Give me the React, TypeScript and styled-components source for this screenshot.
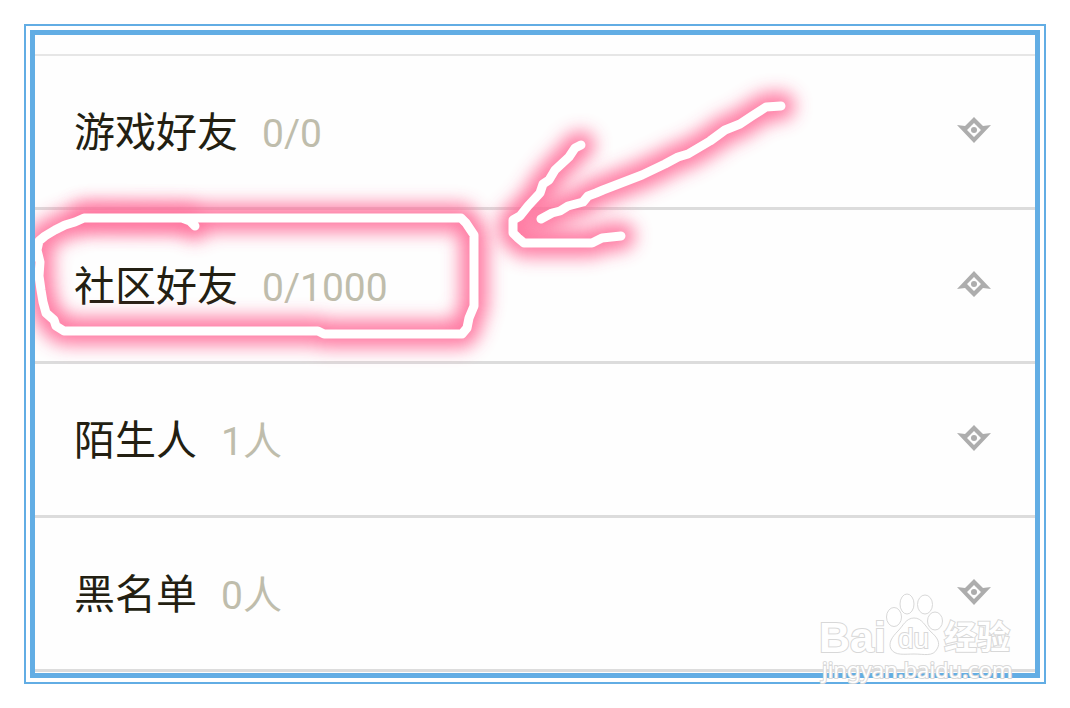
import React from "react";
import styled, { createGlobalStyle } from "styled-components";

const Global = createGlobalStyle`
  body { margin: 0; background: #fff; }
  *, *::before, *::after { box-sizing: border-box; }
`;

const Page = styled.main`
  padding: 24px;
`;

const OuterFrame = styled.div`
  border: 2px solid #62ade4;
  padding: 4px;
`;

const InnerFrame = styled.section`
  position: relative;
  border: 5px solid #62ade4;
  padding: 19px 0 1px;
  background: #fefefe;
`;

const List = styled.ul`
  list-style: none;
  margin: 0;
  padding: 0;
  border-top: 2px solid #e6e6e6;
`;

const Row = styled.li`
  border-bottom: 3px solid #dcdcdc;
`;

const RowButton = styled.button`
  display: flex;
  align-items: center;
  justify-content: space-between;
  width: 100%;
  height: 151px;
  padding: 0 44px 4px 39px;
  border: 0;
  background: transparent;
  text-align: left;
`;

const Label = styled.span`
  display: flex;
  align-items: baseline;
  gap: 24px;
  padding-top: 4px;
  line-height: 48px;
`;

const Name = styled.span`
  font-size: 41px;
  color: #231f12;
  font-family: "Noto Sans CJK SC", sans-serif;
`;

const Count = styled.span`
  font-size: 39px;
  color: #bfbdac;
  font-family: Roboto, "Noto Sans CJK SC", sans-serif;
`;

const Marker = styled.svg<{ $up?: boolean }>`
  width: 34px;
  height: 26px;
  transform: ${(p) => (p.$up ? "scaleY(-1)" : "none")};
`;

const Drawing = styled.svg`
  position: absolute;
  left: 0;
  top: 0;
  width: 800px;
  height: 360px;
  pointer-events: none;
`;

const Watermark = styled.svg`
  position: absolute;
  right: 15px;
  bottom: -16px;
  width: 210px;
  height: 105px;
  pointer-events: none;
`;

const groups = [
  { name: "游戏好友", count: "0/0", up: false },
  { name: "社区好友", count: "0/1000", up: true },
  { name: "陌生人", count: "1人", up: false },
  { name: "黑名单", count: "0人", up: false },
];

const strokes = [
  "M195 226L190 221L182 218H84L75 222L65 225L55 230L45 236L39 241L37 250L40 262L39 276L41 290L43 302L46 313L54 320L56 326L64 331H318L324 334H462L467 328L469 318L474 306V235L466 223L461 218H182",
  "M781 106L766 107L752 116L740 124L725 130L710 141L688 154L678 157L665 164L642 175L603 190L596 193L588 196L583 202L568 206L560 211L552 213L541 219",
  "M581 145L575 148L569 157L555 170L549 180L543 184L540 193L528 206L520 216L513 220V233L518 238L524 243H592L602 238L621 236",
];

export default function App() {
  return (
    <Page>
      <Global />
      <OuterFrame>
        <InnerFrame>
          <List>
            {groups.map((g) => (
              <Row key={g.name}>
                <RowButton type="button">
                  <Label>
                    <Name>{g.name}</Name>
                    <Count>{g.count}</Count>
                  </Label>
                  <Marker viewBox="0 0 34 26" $up={g.up} aria-hidden="true">
                    <path
                      fill="#adadad"
                      fillRule="evenodd"
                      d="M17 0L26 9L34 8L17 26L0 8L8 9ZM17 6L10 13L17 20L24 13Z"
                    />
                    <circle cx="17" cy="13" r="3" fill="#adadad" />
                  </Marker>
                </RowButton>
              </Row>
            ))}
          </List>
          <Drawing viewBox="35 35 800 360" aria-hidden="true">
            <defs>
              <filter id="glow" filterUnits="userSpaceOnUse" x="0" y="40" width="860" height="360">
                <feGaussianBlur stdDeviation="9" />
              </filter>
            </defs>
            <g fill="none" strokeLinejoin="round" strokeLinecap="round">
              <g stroke="#ff6c98" strokeWidth="28">
                {strokes.map((d) => <path key={d} d={d} filter="url(#glow)" opacity="0.9" />)}
                <path d="M84 217L188 218" filter="url(#glow)" opacity="0.6" />
              </g>
              <g stroke="#fff" strokeWidth="9">
                {strokes.map((d) => <path key={d} d={d} />)}
              </g>
            </g>
          </Drawing>
          <Watermark viewBox="810 584 210 105" role="img" aria-label="Baidu 经验">
            <g fill="#fff" stroke="#d8d8d8" strokeWidth="1">
              <ellipse cx="894" cy="617" rx="7.5" ry="9.5" />
              <ellipse cx="907" cy="604" rx="7" ry="10" />
              <ellipse cx="925" cy="604.5" rx="7.5" ry="9.5" />
              <ellipse cx="935" cy="621" rx="7.5" ry="9" />
              <path d="M914 618C906 618 903 626 898 631C892 637 888 643 891 649C895 656 905 654 914 654C924 654 933 657 937 649C941 643 937 637 931 632C925 626 922 618 914 618Z" />
              <g strokeWidth="2" paintOrder="stroke">
                <text x="819" y="652" fontFamily="Liberation Sans, sans-serif" fontWeight="700" fontSize="43">Bai</text>
                <text x="898" y="648" fontFamily="Liberation Sans, sans-serif" fontWeight="400" fontSize="28">du</text>
                <text x="944" y="649" fontFamily="Noto Sans CJK SC, sans-serif" fontWeight="700" fontSize="33">经验</text>
                <text x="822" y="678" fontFamily="Noto Sans, sans-serif" fontSize="22">jingyan.baidu.com</text>
              </g>
            </g>
          </Watermark>
        </InnerFrame>
      </OuterFrame>
    </Page>
  );
}
